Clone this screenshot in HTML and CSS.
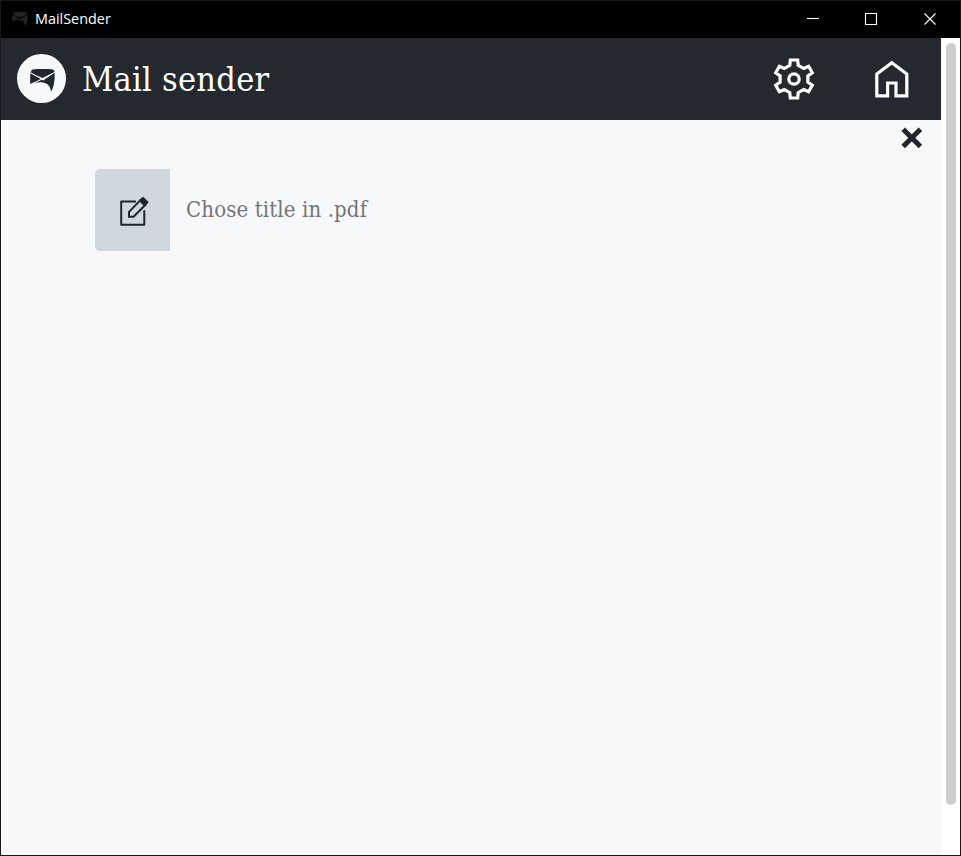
FILE: index.html
```html
<!DOCTYPE html>
<html lang="en">
<head>
<meta charset="utf-8">
<title>MailSender</title>
<link rel="stylesheet" href="styles.css">
</head>
<body>
<svg class="defs" width="0" height="0">
  <symbol id="mail" viewBox="0 0 26 25">
    <path fill="currentColor" d="M1.5 1.7Q1.6.8 2.6.6C9 0 17 0 23.8.4Q25.5.7 25.5 3L13 9.5Q6 6.8.6 3.4Z"/>
    <path fill="currentColor" d="M.2 4.5L11.3 10.3L.2 15.5ZM25.7 4C25.8 12 25 19 21.8 23.8C21.5 18 18 14.5 12.5 13.8C8 13.4 4 14.5.5 16.7L12.2 11.2L14 12L15.8 10.4Z"/>
  </symbol>
</svg>
<div class="window">
  <div class="titlebar">
    <svg class="tiny-logo" width="16" height="15"><use href="#mail"/></svg>
    <span class="window-name">MailSender</span>
    <div class="controls">
      <svg width="58" height="37" viewBox="0 0 58 37"><path d="M22 17.5h12"/></svg>
      <svg width="59" height="37" viewBox="0 0 59 37"><path d="M22.5 12.5h11v11h-11z"/></svg>
      <svg width="59" height="37" viewBox="0 0 59 37"><path d="M22.5 12.5l11 11m0-11l-11 11"/></svg>
    </div>
  </div>
  <div class="view">
    <div class="page">
      <header class="header">
        <span class="logo"><svg width="25" height="24"><use href="#mail"/></svg></span>
        <h1>Mail sender</h1>
        <nav class="nav">
          <svg width="44" height="44" viewBox="-22 -22 44 44" fill="none" stroke="#fff" stroke-width="3.2">
            <path d="M-4.2-13.6L-3.7-19H3.7L4.2-13.6L9.68-10.44L14.6-12.7L18.3-6.3L13.88-3.16V3.16L18.3 6.3L14.6 12.7L9.68 10.44L4.2 13.6L3.7 19H-3.7L-4.2 13.6L-9.68 10.44L-14.6 12.7L-18.3 6.3L-13.88 3.16V-3.16L-18.3-6.3L-14.6-12.7L-9.68-10.44Z"/>
            <circle r="5.2"/>
          </svg>
          <svg width="34" height="38" viewBox="0 0 34 38" fill="none" stroke="#fff" stroke-width="3.2">
            <path d="M1.8 35.8V14L16.8 2.7L31.8 14V35.8H21V23H12.6V35.8Z"/>
          </svg>
        </nav>
      </header>
      <main>
        <svg class="dismiss" width="22" height="22" viewBox="0 0 22 22"><path d="M2.2 2.2L19.4 19.4M19.4 2.2L2.2 19.4"/></svg>
        <div class="field">
          <span class="field-icon">
            <svg width="30" height="31" viewBox="0 0 30 31" fill="none" stroke="#20262d" stroke-width="2">
              <path stroke-linejoin="round" d="M17 5.5H2.2V28.8H25.3V14.2"/>
              <path d="M10 20.8V15.8L21.2 4.4L26 9.2L14.6 20.8Z"/>
              <path fill="#20262d" stroke-linejoin="round" d="M21 4.6L24 1.9L28.4 6.3L25.7 9.2Z"/>
            </svg>
          </span>
          <span class="field-label">Chose title in .pdf</span>
        </div>
      </main>
    </div>
    <div class="scrollbar"><div class="thumb"></div></div>
  </div>
</div>
</body>
</html>
```

FILE: styles.css
```css
* { box-sizing: border-box; }
body { margin: 0; }
.defs { position: absolute; }
.window {
  width: 961px;
  height: 856px;
  border: 1px solid #17181a;
  display: flex;
  flex-direction: column;
  overflow: hidden;
}
.titlebar {
  height: 37px;
  flex: none;
  background: #000;
  display: flex;
  align-items: center;
  padding-left: 11px;
}
.tiny-logo { color: #20252a; }
.window-name {
  margin-left: 7px;
  padding-bottom: 2px;
  color: #fff;
  font: 14.4px/20px "Open Sans", "Noto Sans", sans-serif;
}
.controls { display: flex; margin-left: auto; margin-right: -1px; }
.controls svg { fill: none; stroke: #fff; stroke-width: 1.1; }
.view { flex: 1; display: flex; }
.page { width: 940px; background: #f6f8fa; }
.header {
  height: 82px;
  background: #24292f;
  display: flex;
  align-items: center;
  padding: 0 32px 1px 16px;
}
.logo {
  width: 49px;
  height: 49px;
  border-radius: 50%;
  background: #f6f8fa;
  color: #20262d;
  display: flex;
  align-items: center;
  justify-content: center;
  padding: 4px 0 0 1px;
}
h1 {
  margin: 0 0 0 16px;
  color: #fff;
  font: 400 34px/44px "DejaVu Serif Condensed", "DejaVu Serif", serif;
  letter-spacing: 0.25px;
  white-space: nowrap;
}
.nav { margin-left: auto; display: flex; align-items: center; gap: 59px; }
main { display: flex; flex-direction: column; }
.dismiss {
  align-self: flex-end;
  margin: 7px 18px 20px 0;
  stroke: #20262d;
  stroke-width: 5;
}
.field { display: flex; align-items: center; height: 82px; margin-left: 94px; }
.field-icon {
  width: 75px;
  height: 82px;
  border-radius: 5px 0 0 5px;
  background: #d0d7df;
  display: flex;
  align-items: center;
  justify-content: center;
  padding: 2px 0 0 3px;
}
.field-label {
  margin-left: 16px;
  color: #757575;
  font: 22px/30px "DejaVu Serif Condensed", "DejaVu Serif", serif;
  letter-spacing: 0.12px;
  white-space: nowrap;
}
.scrollbar { width: 19px; background: #fff; padding: 5px 4px 0 5px; }
.thumb { width: 10px; height: 762px; border-radius: 5px; background: #cdcdcd; }
```
